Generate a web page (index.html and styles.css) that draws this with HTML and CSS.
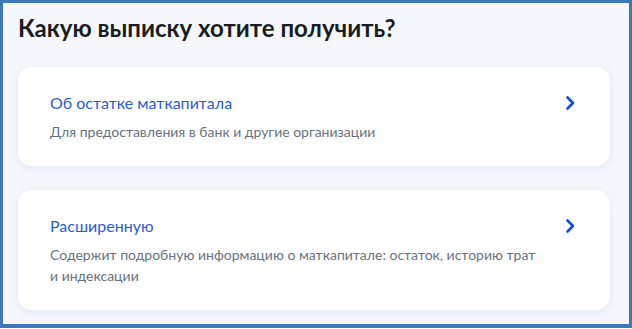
FILE: index.html
```html
<!DOCTYPE html>
<html lang="ru">
<head>
  <meta charset="UTF-8">
  <meta name="viewport" content="width=device-width, initial-scale=1.0">
  <title>Выписка</title>
  <link rel="stylesheet" href="styles.css">
</head>
<body>
  <div class="frame">
    <h1 class="title">Какую выписку хотите получить?</h1>

    <a class="card" href="#">
      <div class="card-text">
        <div class="card-title">Об остатке маткапитала</div>
        <div class="card-desc">Для предоставления в банк и другие организации</div>
      </div>
      <svg class="chevron" width="10" height="16" viewBox="0 0 10 16">
        <path d="M2.5 2.5 L8 8 L2.5 13.5" fill="none" stroke="#0d4cd3" stroke-width="2.6" stroke-linecap="round" stroke-linejoin="round"/>
      </svg>
    </a>

    <a class="card" href="#">
      <div class="card-text">
        <div class="card-title">Расширенную</div>
        <div class="card-desc">Содержит подробную информацию о маткапитале: остаток, историю трат<br>и индексации</div>
      </div>
      <svg class="chevron" width="10" height="16" viewBox="0 0 10 16">
        <path d="M2.5 2.5 L8 8 L2.5 13.5" fill="none" stroke="#0d4cd3" stroke-width="2.6" stroke-linecap="round" stroke-linejoin="round"/>
      </svg>
    </a>
  </div>
</body>
</html>
```

FILE: styles.css
```css
body {
  margin: 0;
  padding: 0;
  font-family: 'Lato', 'Noto Sans', sans-serif;
  background: #ffffff;
}

.frame {
  box-sizing: border-box;
  width: 632px;
  height: 328px;
  border: 3px solid #3f78b9;
  border-bottom-width: 4px;
  background: #f5f7fc;
  padding: 9px 19px 0 15px;
}

.title {
  margin: 0 0 23px;
  font-size: 24px;
  line-height: 32px;
  font-weight: 700;
  color: #1a1c22;
}

.card {
  display: flex;
  justify-content: space-between;
  align-items: flex-start;
  background: #ffffff;
  border-radius: 14px;
  box-shadow: 0 2px 8px rgba(140, 160, 210, 0.18);
  padding: 26px 35px 24px 32px;
  text-decoration: none;
  margin-bottom: 24px;
}

.card-title {
  font-size: 16px;
  line-height: 20px;
  color: #2a5dd6;
  margin-bottom: 8px;
}

.card-desc {
  font-size: 14px;
  line-height: 21px;
  color: #69727e;
}

.chevron {
  margin-top: 2px;
}
```
